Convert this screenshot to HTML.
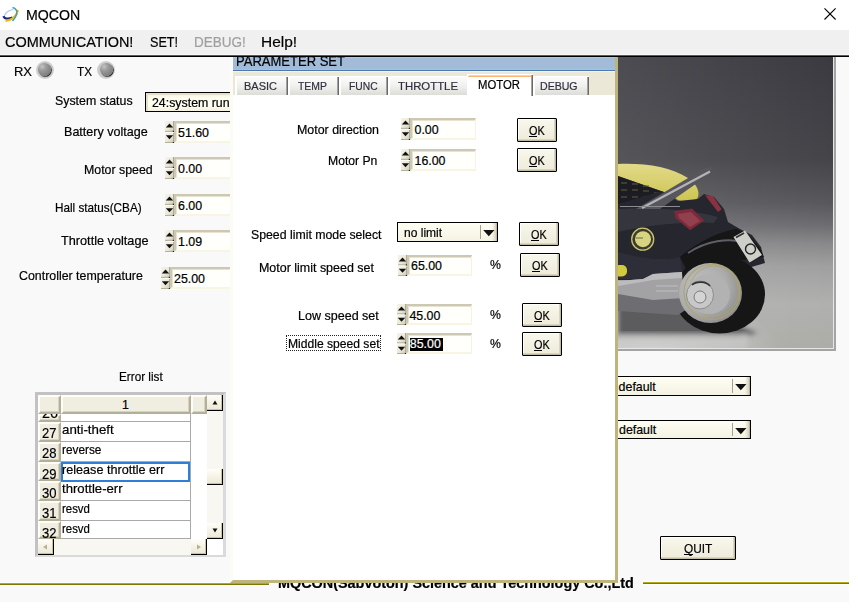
<!DOCTYPE html>
<html><head><meta charset="utf-8"><style>
html,body{margin:0;padding:0;}
body{width:858px;height:609px;overflow:hidden;position:relative;background:#fff;font-family:"Liberation Sans",sans-serif;color:#000;}
.a{position:absolute;}
.t{position:absolute;white-space:pre;font-family:"Liberation Sans",sans-serif;color:#000;z-index:5;-webkit-text-stroke:0.2px currentColor;}
.td{z-index:25;}
.spin{position:absolute;width:9px;height:22px;}
.edit{position:absolute;box-sizing:border-box;background:#fffffb;border-top:2px solid #ccc8b3;border-left:2px solid #ccc8b3;border-right:1px solid #f6f3e2;border-bottom:2px solid #f8f5e4;box-shadow:inset 1px 1px 0 #e6e3d3;}
.btn{position:absolute;box-sizing:border-box;border:1px solid #000;border-radius:1px;background:linear-gradient(#f9f8ee,#f3f1e2 50%,#eeebda);box-shadow:inset -1px -1px 0 #bdb9a2, inset -2px -2px 0 #d9d5c0, inset 1px 1px 0 #fffffa;}
.combo{position:absolute;box-sizing:border-box;border:1px solid #000;background:linear-gradient(#fffef4,#f4f2e2);}
.led{position:absolute;width:18px;height:18px;border-radius:50%;background:radial-gradient(circle at 50% 50%,#c8c8c8 55%,#d6d6d6 80%,#e8e8e8 100%);}
.led i{position:absolute;left:2.5px;top:2.5px;width:13px;height:13px;border-radius:50%;background:radial-gradient(circle at 32% 28%,#c4c4c4 0,#9c9c9c 30%,#848484 65%,#6a6a6a 100%);box-shadow:0.8px 0.8px 0 #2a2a2a;}

</style></head><body>
<svg class="a" style="left:0;top:2px" width="24" height="24" viewBox="0 0 24 24">
 <path d="M4.5 15 C4 11 9 8 13.5 7.5" stroke="#7d96d0" stroke-width="1.2" fill="none" opacity=".55"/>
 <path d="M3.6 14.2 C4 17 8 17.5 12.5 15.5" stroke="#17268a" stroke-width="2.2" fill="none"/>
 <path d="M5.5 18.6 C10 19.2 15 15.5 17.2 11" stroke="#f4b800" stroke-width="2.1" fill="none"/>
 <path d="M12.5 5.5 C16 6 17.5 9 16.5 12.5 C15.5 15.5 14 17.5 12.5 19" stroke="#2aa7cc" stroke-width="1.5" fill="none"/>
 <rect x="16.8" y="8" width="1.6" height="2.5" fill="#f08a00"/>
</svg>
<svg class="a" style="left:820px;top:4px" width="20" height="20" viewBox="0 0 20 20">
 <path d="M4.5 4.3 L15.6 15.5 M15.6 4.3 L4.5 15.5" stroke="#000" stroke-width="1.1"/>
</svg>
<div class="a" style="left:0;top:30px;width:849px;height:25px;background:#f0f0f0"></div>
<div class="a" style="left:0;top:54px;width:849px;height:1px;background:#f8f8f8"></div>
<div class="a" style="left:0;top:55px;width:849px;height:1px;background:#5a5a5a"></div>
<div class="a" style="left:0;top:56px;width:849px;height:1px;background:#000"></div>
<div class="a" style="left:0;top:57px;width:849px;height:545px;background:#f9f9f9"></div>
<div class="led" style="left:35.5px;top:60.5px"><i></i></div>
<div class="led" style="left:97px;top:60.5px"><i></i></div>
<div class="a" style="left:145px;top:92px;width:85px;height:20px;box-sizing:border-box;border:1px solid #000;border-right:0;background:linear-gradient(#f1eedc,#fffdf0 30%,#fffdf0 70%,#f3f0df);box-shadow:inset 2px 2px 0 #e3dfc8;z-index:2;overflow:hidden"></div>
<div class="a" style="left:230px;top:57px;width:3px;height:526px;background:#fcfbf6;z-index:6"></div>

<svg class="a" style="left:165px;top:121px;z-index:3" width="9" height="22" viewBox="0 0 9 22">
<defs><linearGradient id="sg" x1="0" y1="0" x2="1" y2="1"><stop offset="0" stop-color="#f7f5ea"/><stop offset="0.55" stop-color="#ebe8d8"/><stop offset="1" stop-color="#c9c5b0"/></linearGradient></defs>
<rect width="9" height="11.0" fill="url(#sg)"/>
<rect y="11.0" width="9" height="11.0" fill="url(#sg)"/>
<rect x="8" y="0" width="1" height="22" fill="#aeaa96"/>
<rect x="0" y="9.8" width="9" height="1.2" fill="#b9b5a0"/>
<rect x="0" y="11.0" width="9" height="1" fill="#fbfaf3"/>
<rect x="0" y="21" width="9" height="1" fill="#b4b09b"/>
<rect x="7.8" y="9.8" width="1.2" height="1.2" fill="#222"/>
<rect x="7.8" y="21" width="1.2" height="1" fill="#222"/>
<path d="M4.5 2.6 L8.2 6.6 L0.8 6.6 Z" fill="#111"/>
<path d="M0.8 14.2 L8.2 14.2 L4.5 18.2 Z" fill="#111"/>
</svg>
<div class='edit' style='left:174px;top:121px;width:80px;height:22px;z-index:3'></div>
<svg class="a" style="left:165px;top:157px;z-index:3" width="9" height="22" viewBox="0 0 9 22">
<defs><linearGradient id="sg" x1="0" y1="0" x2="1" y2="1"><stop offset="0" stop-color="#f7f5ea"/><stop offset="0.55" stop-color="#ebe8d8"/><stop offset="1" stop-color="#c9c5b0"/></linearGradient></defs>
<rect width="9" height="11.0" fill="url(#sg)"/>
<rect y="11.0" width="9" height="11.0" fill="url(#sg)"/>
<rect x="8" y="0" width="1" height="22" fill="#aeaa96"/>
<rect x="0" y="9.8" width="9" height="1.2" fill="#b9b5a0"/>
<rect x="0" y="11.0" width="9" height="1" fill="#fbfaf3"/>
<rect x="0" y="21" width="9" height="1" fill="#b4b09b"/>
<rect x="7.8" y="9.8" width="1.2" height="1.2" fill="#222"/>
<rect x="7.8" y="21" width="1.2" height="1" fill="#222"/>
<path d="M4.5 2.6 L8.2 6.6 L0.8 6.6 Z" fill="#111"/>
<path d="M0.8 14.2 L8.2 14.2 L4.5 18.2 Z" fill="#111"/>
</svg>
<div class='edit' style='left:174px;top:157px;width:80px;height:22px;z-index:3'></div>
<svg class="a" style="left:165px;top:194px;z-index:3" width="9" height="22" viewBox="0 0 9 22">
<defs><linearGradient id="sg" x1="0" y1="0" x2="1" y2="1"><stop offset="0" stop-color="#f7f5ea"/><stop offset="0.55" stop-color="#ebe8d8"/><stop offset="1" stop-color="#c9c5b0"/></linearGradient></defs>
<rect width="9" height="11.0" fill="url(#sg)"/>
<rect y="11.0" width="9" height="11.0" fill="url(#sg)"/>
<rect x="8" y="0" width="1" height="22" fill="#aeaa96"/>
<rect x="0" y="9.8" width="9" height="1.2" fill="#b9b5a0"/>
<rect x="0" y="11.0" width="9" height="1" fill="#fbfaf3"/>
<rect x="0" y="21" width="9" height="1" fill="#b4b09b"/>
<rect x="7.8" y="9.8" width="1.2" height="1.2" fill="#222"/>
<rect x="7.8" y="21" width="1.2" height="1" fill="#222"/>
<path d="M4.5 2.6 L8.2 6.6 L0.8 6.6 Z" fill="#111"/>
<path d="M0.8 14.2 L8.2 14.2 L4.5 18.2 Z" fill="#111"/>
</svg>
<div class='edit' style='left:174px;top:194px;width:80px;height:22px;z-index:3'></div>
<svg class="a" style="left:165px;top:230px;z-index:3" width="9" height="22" viewBox="0 0 9 22">
<defs><linearGradient id="sg" x1="0" y1="0" x2="1" y2="1"><stop offset="0" stop-color="#f7f5ea"/><stop offset="0.55" stop-color="#ebe8d8"/><stop offset="1" stop-color="#c9c5b0"/></linearGradient></defs>
<rect width="9" height="11.0" fill="url(#sg)"/>
<rect y="11.0" width="9" height="11.0" fill="url(#sg)"/>
<rect x="8" y="0" width="1" height="22" fill="#aeaa96"/>
<rect x="0" y="9.8" width="9" height="1.2" fill="#b9b5a0"/>
<rect x="0" y="11.0" width="9" height="1" fill="#fbfaf3"/>
<rect x="0" y="21" width="9" height="1" fill="#b4b09b"/>
<rect x="7.8" y="9.8" width="1.2" height="1.2" fill="#222"/>
<rect x="7.8" y="21" width="1.2" height="1" fill="#222"/>
<path d="M4.5 2.6 L8.2 6.6 L0.8 6.6 Z" fill="#111"/>
<path d="M0.8 14.2 L8.2 14.2 L4.5 18.2 Z" fill="#111"/>
</svg>
<div class='edit' style='left:174px;top:230px;width:80px;height:22px;z-index:3'></div>
<svg class="a" style="left:161px;top:267px;z-index:3" width="9" height="22" viewBox="0 0 9 22">
<defs><linearGradient id="sg" x1="0" y1="0" x2="1" y2="1"><stop offset="0" stop-color="#f7f5ea"/><stop offset="0.55" stop-color="#ebe8d8"/><stop offset="1" stop-color="#c9c5b0"/></linearGradient></defs>
<rect width="9" height="11.0" fill="url(#sg)"/>
<rect y="11.0" width="9" height="11.0" fill="url(#sg)"/>
<rect x="8" y="0" width="1" height="22" fill="#aeaa96"/>
<rect x="0" y="9.8" width="9" height="1.2" fill="#b9b5a0"/>
<rect x="0" y="11.0" width="9" height="1" fill="#fbfaf3"/>
<rect x="0" y="21" width="9" height="1" fill="#b4b09b"/>
<rect x="7.8" y="9.8" width="1.2" height="1.2" fill="#222"/>
<rect x="7.8" y="21" width="1.2" height="1" fill="#222"/>
<path d="M4.5 2.6 L8.2 6.6 L0.8 6.6 Z" fill="#111"/>
<path d="M0.8 14.2 L8.2 14.2 L4.5 18.2 Z" fill="#111"/>
</svg>
<div class='edit' style='left:170px;top:267px;width:80px;height:22px;z-index:3'></div>
<div class="a" style="left:35px;top:392px;width:191px;height:165px;box-sizing:border-box;border-top:3px solid #c2c2c2;border-left:3px solid #c2c2c2;border-right:3px solid #dadada;border-bottom:3px solid #dadada;background:#fff"></div>
<div class='a' style='left:38px;top:395px;width:23px;height:19px;box-sizing:border-box;background:#f0eee0;border-top:2px solid #fefdf7;border-left:2px solid #fefdf7;border-right:2px solid #b3af98;border-bottom:2px solid #b3af98;box-shadow:inset -1px -1px 0 #d8d4c0;z-index:2'></div>
<div class='a' style='left:61px;top:395px;width:130px;height:19px;box-sizing:border-box;background:#f0eee0;border-top:2px solid #fefdf7;border-left:2px solid #fefdf7;border-right:2px solid #b3af98;border-bottom:2px solid #b3af98;box-shadow:inset -1px -1px 0 #d8d4c0;z-index:2'></div>
<div class='a' style='left:191px;top:395px;width:16px;height:19px;box-sizing:border-box;background:#f0eee0;border-top:2px solid #fefdf7;border-left:2px solid #fefdf7;border-right:2px solid #b3af98;border-bottom:2px solid #b3af98;box-shadow:inset -1px -1px 0 #d8d4c0;z-index:2'></div>
<div class='a' style='left:38px;top:414px;width:23px;height:7.5px;box-sizing:border-box;background:#f0eee0;border-top:2px solid #fefdf7;border-left:2px solid #fefdf7;border-right:2px solid #b3af98;border-bottom:2px solid #b3af98;box-shadow:inset -1px -1px 0 #d8d4c0;z-index:2'></div>
<div class='a' style='left:61px;top:414px;width:130px;height:7.5px;box-sizing:border-box;border-bottom:1px solid #a9a9a9;border-right:1px solid #a9a9a9;z-index:2'></div>
<div class='a' style='left:38px;top:421.5px;width:23px;height:20px;box-sizing:border-box;background:#f0eee0;border-top:2px solid #fefdf7;border-left:2px solid #fefdf7;border-right:2px solid #b3af98;border-bottom:2px solid #b3af98;box-shadow:inset -1px -1px 0 #d8d4c0;z-index:2'></div>
<div class='a' style='left:61px;top:421.5px;width:130px;height:20px;box-sizing:border-box;border-bottom:1px solid #a9a9a9;border-right:1px solid #a9a9a9;z-index:2'></div>
<div class='a' style='left:38px;top:441.5px;width:23px;height:20.3px;box-sizing:border-box;background:#f0eee0;border-top:2px solid #fefdf7;border-left:2px solid #fefdf7;border-right:2px solid #b3af98;border-bottom:2px solid #b3af98;box-shadow:inset -1px -1px 0 #d8d4c0;z-index:2'></div>
<div class='a' style='left:61px;top:441.5px;width:130px;height:20.3px;box-sizing:border-box;border-bottom:1px solid #a9a9a9;border-right:1px solid #a9a9a9;z-index:2'></div>
<div class='a' style='left:38px;top:461.8px;width:23px;height:19.5px;box-sizing:border-box;background:#f0eee0;border-top:2px solid #fefdf7;border-left:2px solid #fefdf7;border-right:2px solid #b3af98;border-bottom:2px solid #b3af98;box-shadow:inset -1px -1px 0 #d8d4c0;z-index:2'></div>
<div class='a' style='left:61px;top:461.8px;width:130px;height:19.5px;box-sizing:border-box;border-bottom:1px solid #a9a9a9;border-right:1px solid #a9a9a9;z-index:2'></div>
<div class='a' style='left:38px;top:481.3px;width:23px;height:20px;box-sizing:border-box;background:#f0eee0;border-top:2px solid #fefdf7;border-left:2px solid #fefdf7;border-right:2px solid #b3af98;border-bottom:2px solid #b3af98;box-shadow:inset -1px -1px 0 #d8d4c0;z-index:2'></div>
<div class='a' style='left:61px;top:481.3px;width:130px;height:20px;box-sizing:border-box;border-bottom:1px solid #a9a9a9;border-right:1px solid #a9a9a9;z-index:2'></div>
<div class='a' style='left:38px;top:501.3px;width:23px;height:20px;box-sizing:border-box;background:#f0eee0;border-top:2px solid #fefdf7;border-left:2px solid #fefdf7;border-right:2px solid #b3af98;border-bottom:2px solid #b3af98;box-shadow:inset -1px -1px 0 #d8d4c0;z-index:2'></div>
<div class='a' style='left:61px;top:501.3px;width:130px;height:20px;box-sizing:border-box;border-bottom:1px solid #a9a9a9;border-right:1px solid #a9a9a9;z-index:2'></div>
<div class='a' style='left:38px;top:521.3px;width:23px;height:17.7px;box-sizing:border-box;background:#f0eee0;border-top:2px solid #fefdf7;border-left:2px solid #fefdf7;border-right:2px solid #b3af98;border-bottom:2px solid #b3af98;box-shadow:inset -1px -1px 0 #d8d4c0;z-index:2'></div>
<div class='a' style='left:61px;top:521.3px;width:130px;height:17.7px;box-sizing:border-box;border-bottom:1px solid #a9a9a9;border-right:1px solid #a9a9a9;z-index:2'></div>
<div class='a' style='left:36px;top:414px;width:25px;height:7px;overflow:hidden;z-index:3'><div class='t' style='left:5.7px;top:-8.4px;font-size:14.5px;line-height:14.5px;transform:scaleX(0.985);transform-origin:0 0'>26</div></div>
<div class='a' style='left:61px;top:462px;width:129px;height:20px;box-sizing:border-box;border:2px solid #2f7fd6;z-index:3'></div>
<div class='a' style='left:207px;top:395px;width:16px;height:143px;background:#f8f7f2;z-index:2'></div>
<div class='a' style='left:207px;top:395px;width:16px;height:16px;box-sizing:border-box;background:linear-gradient(#fffef8,#ebe8d6);border-right:1px solid #000;border-bottom:1px solid #000;box-shadow:inset -1px -1px 0 #cfc48c;z-index:3'><svg class='a' style='left:5px;top:5px' width='6' height='5'><path d='M3 0.5 L5.5 4.5 L0.5 4.5Z' fill='#111'/></svg></div>
<div class='a' style='left:207px;top:523px;width:16px;height:16px;box-sizing:border-box;background:linear-gradient(#fffef8,#ebe8d6);border-right:1px solid #000;border-bottom:1px solid #000;box-shadow:inset -1px -1px 0 #cfc48c;z-index:3'><svg class='a' style='left:5px;top:5px' width='6' height='5'><path d='M0.5 0.5 L5.5 0.5 L3 4.5Z' fill='#111'/></svg></div>
<div class='a' style='left:207px;top:469px;width:16px;height:16px;box-sizing:border-box;background:linear-gradient(#fffef8,#ebe8d6);border-right:1px solid #000;border-bottom:1px solid #000;box-shadow:inset -1px -1px 0 #cfc48c;z-index:3'></div>
<div class='a' style='left:38px;top:539px;width:169px;height:16px;background:#f8f7f2;z-index:2'></div>
<div class='a' style='left:38px;top:539px;width:16px;height:16px;box-sizing:border-box;background:linear-gradient(#fffef8,#ebe8d6);border-right:1px solid #000;border-bottom:1px solid #000;box-shadow:inset -1px -1px 0 #cfc48c;z-index:3'><svg class='a' style='left:4px;top:5px' width='6' height='6'><path d='M1 3 L5 0.5 L5 5.5Z' fill='#b8b090'/></svg></div>
<div class='a' style='left:191px;top:539px;width:16px;height:16px;box-sizing:border-box;background:linear-gradient(#fffef8,#ebe8d6);border-right:1px solid #000;border-bottom:1px solid #000;box-shadow:inset -1px -1px 0 #cfc48c;z-index:3'><svg class='a' style='left:5px;top:5px' width='6' height='6'><path d='M5 3 L1 0.5 L1 5.5Z' fill='#b8b090'/></svg></div>
<div class='a' style='left:207px;top:539px;width:16px;height:16px;background:#fff;z-index:2'></div>
<svg class="a" style="left:618px;top:57px" width="218" height="295" viewBox="0 0 218 295">
 <defs>
  <linearGradient id="bg" x1="0" y1="0" x2="0" y2="1">
   <stop offset="0" stop-color="#3a3a40"/>
   <stop offset="0.35" stop-color="#444449"/>
   <stop offset="0.5" stop-color="#58585c"/>
   <stop offset="0.58" stop-color="#6e6e72"/>
   <stop offset="0.64" stop-color="#88888a"/>
   <stop offset="0.72" stop-color="#a0a0a0"/>
   <stop offset="0.85" stop-color="#b0b0af"/>
   <stop offset="1" stop-color="#acaca8"/>
  </linearGradient>
  <linearGradient id="lft" x1="0" y1="0" x2="1" y2="0">
   <stop offset="0" stop-color="#fff" stop-opacity="0.09"/>
   <stop offset="1" stop-color="#fff" stop-opacity="0"/>
  </linearGradient>
  <radialGradient id="gl" cx="0.15" cy="1" r="0.6">
   <stop offset="0" stop-color="#e0e0e0" stop-opacity="0.8"/>
   <stop offset="1" stop-color="#e0e0e0" stop-opacity="0"/>
  </radialGradient>
  <radialGradient id="hub" cx="0.35" cy="0.4" r="0.7">
   <stop offset="0" stop-color="#c2c2c2"/>
   <stop offset="0.6" stop-color="#acacac"/>
   <stop offset="1" stop-color="#8a8a8a"/>
  </radialGradient>
  <linearGradient id="seat" x1="0" y1="0" x2="0" y2="1">
   <stop offset="0" stop-color="#e2da8a"/>
   <stop offset="1" stop-color="#cdc450"/>
  </linearGradient>
  <linearGradient id="gnd" x1="0" y1="0" x2="0" y2="1">
   <stop offset="0" stop-color="#6e6e72"/>
   <stop offset="0.45" stop-color="#525254"/>
   <stop offset="0.6" stop-color="#9c9c9c"/>
   <stop offset="1" stop-color="#c6c6c4"/>
  </linearGradient>
  <filter id="blur"><feGaussianBlur stdDeviation="2.5"/></filter>
  <filter id="b1"><feGaussianBlur stdDeviation="0.5"/></filter>
 </defs>
 <rect width="215" height="291" fill="url(#bg)"/>
 <rect width="215" height="291" fill="url(#lft)"/>
 <rect y="200" width="215" height="91" fill="url(#gl)"/>
 <!-- ground shadow -->
 <path d="M0 246 L70 250 L112 266 L140 276 L120 280 L0 280 Z" fill="#5c5c5e" filter="url(#blur)"/>
 <rect x="0" y="276" width="130" height="15" fill="#c8c8c6" opacity=".7" filter="url(#blur)"/>
 <g filter="url(#b1)">
 <!-- seat -->
 <path d="M0 107 C28 106 52 110 70 121 C78 126 82 134 80 140 C78 145 68 146 60 143 L52 137 L43 134 L0 119 Z" fill="url(#seat)"/>
 <path d="M0 119 L43 134 L46 148 L0 148 Z" fill="#1c1c24"/>
 <path d="M3 126 h6 M14 127 h6 M25 129 h6 M3 133 h6 M14 133 h6 M25 134 h6 M36 136 h5 M3 140 h6 M14 140 h6 M25 140 h6" stroke="#5e5c3c" stroke-width="1"/>
 <!-- body dark blob -->
 <path d="M0 147 L44 134 L60 144 L80 142 L86 137 L96 140 L106 152 L110 165 L122 172 L134 178 L143 190 L147 206 L120 214 L70 222 L40 224 L0 223 Z" fill="#26262e"/>
 <path d="M0 152 C30 150 70 152 100 160 L96 166 C70 164 30 168 0 175 Z" fill="#40404a" opacity=".55"/>
 <path d="M0 195 C20 200 40 205 62 200 L66 222 L0 222 Z" fill="#30303a" opacity=".8"/>
 <!-- dark gap / fender -->
 <path d="M62 200 C80 185 100 175 118 172 C130 176 140 186 146 200 L110 205 L70 215 Z" fill="#131316"/>
 <path d="M70 196 C88 184 110 180 130 186" stroke="#5e5e66" stroke-width="2" fill="none"/>
 <!-- tire -->
 <ellipse cx="101.5" cy="237.5" rx="45.5" ry="39" fill="#141418"/>
 <!-- swingarm -->
 <path d="M0 236 L64 240 L72 250 L60 258 L0 254 Z" fill="#6e6e72"/>
 <path d="M0 224 L25 222 L35 217 L64 215 L66 241 L35 243 L0 237 Z" fill="#a2a2a4"/>
 <path d="M0 224 L25 222 L35 217 L64 215 L64 221 L35 223 L0 229 Z" fill="#bcbcbe"/>
 <path d="M38 229 L60 229 M38 234 L60 234" stroke="#c6c6c8" stroke-width="0.8"/>
 <!-- hub -->
 <ellipse cx="92.5" cy="236" rx="31.5" ry="30" fill="url(#hub)"/>
 <ellipse cx="94" cy="235" rx="28" ry="27.5" fill="none" stroke="#aea46a" stroke-width="1.2" opacity=".9"/>
 <ellipse cx="96" cy="234" rx="24.5" ry="25" fill="none" stroke="#aea46a" stroke-width="1" opacity=".8"/>
 <ellipse cx="91" cy="237" rx="21" ry="20" fill="#b2b2b2"/>
 <ellipse cx="82" cy="238" rx="13.5" ry="14" fill="#c8c8c8" stroke="#8c8c8c" stroke-width="1"/>
 <path d="M74 228 C78 224 88 224 92 229" stroke="#333" stroke-width="1.6" fill="none"/>
 <ellipse cx="82" cy="240" rx="6" ry="6" fill="#d4d4d4" stroke="#666" stroke-width="0.8"/>
 <!-- tail lights -->
 <path d="M56.4 154 L74 151.4 L86.2 163.6 L72.2 173.2 L57.3 161 Z" fill="#7c2c3a"/>
 <path d="M60 157 L73 155 L82 164 L72 170 L61 161 Z" fill="#a4505e" opacity=".55"/>
 <path d="M87 138.2 L94.9 139.1 L103.6 152.2 L100.1 154.9 Z" fill="#8a3242"/>
 <!-- handle bar -->
 <path d="M18 152 L87 111 L94 110 L92 117 L42 152 Z" fill="#56565c"/>
 <path d="M24 151 L92 114.5" stroke="#b4b4b8" stroke-width="2.2"/>
 <path d="M2 149.5 L62 149.5" stroke="#8c8c90" stroke-width="1"/>
 <!-- badge -->
 <circle cx="24.7" cy="182.2" r="11" fill="#3a3a30" stroke="#c8c46a" stroke-width="1.3"/>
 <circle cx="25" cy="182.2" r="8" fill="#d6d480"/>
 <path d="M18 181 h7" stroke="#6a6a40" stroke-width="1"/>
 <!-- yellow piece -->
 <rect x="-4" y="208" width="13" height="11.5" rx="5" fill="#d2ca3c"/>
 <!-- plate -->
 <path d="M115.5 180 L127 173.5 L144 198 L131.5 205.5 Z" fill="#cfcfca"/>
 <circle cx="132.5" cy="192" r="5" fill="none" stroke="#222" stroke-width="1.4"/>
 <path d="M118 180.5 L126 176" stroke="#333" stroke-width="2"/>
 </g>
 <rect x="215" y="0" width="1" height="292" fill="#e6e6e6"/>
 <rect x="216" y="0" width="2" height="294" fill="#a4a4a4"/>
 <rect x="0" y="291" width="216" height="1" fill="#e6e6e6"/>
 <rect x="0" y="292" width="218" height="2" fill="#a4a4a4"/>
</svg>

<div class='combo' style='left:560px;top:376px;width:191px;height:20px;z-index:3'>
<div class='a' style='left:171px;top:2px;width:1px;height:14px;background:#a3a190'></div>
<div class='a' style='left:172px;top:0;width:17px;height:18px;background:linear-gradient(90deg,rgba(255,255,255,0) 70%,#d8d4bf 92%,#a8a48e)'></div>
<svg class='a' style='left:173.5px;top:7.0px' width='12' height='7' viewBox='0 0 12 7'><path d='M0.2 0 L11.5 0 L5.8 6.3 Z' fill='#111'/></svg>
</div>
<div class='combo' style='left:560px;top:420px;width:191px;height:19px;z-index:3'>
<div class='a' style='left:171px;top:2px;width:1px;height:13px;background:#a3a190'></div>
<div class='a' style='left:172px;top:0;width:17px;height:17px;background:linear-gradient(90deg,rgba(255,255,255,0) 70%,#d8d4bf 92%,#a8a48e)'></div>
<svg class='a' style='left:173.5px;top:6.5px' width='12' height='7' viewBox='0 0 12 7'><path d='M0.2 0 L11.5 0 L5.8 6.3 Z' fill='#111'/></svg>
</div>
<div class='btn' style='left:660px;top:536px;width:76px;height:24px;z-index:3'></div>
<div class='a' style='left:683.6px;top:554px;width:9px;height:1px;background:#000;z-index:6'></div>
<div class='a' style='left:0;top:582px;width:269px;height:4px;background:linear-gradient(#fff 0 25%,#aeaa1a 25% 50%,#7c7800 50% 75%,#fff 75%)'></div>
<div class='a' style='left:643px;top:581px;width:206px;height:4px;background:linear-gradient(#fff 0 25%,#aeaa1a 25% 50%,#7c7800 50% 75%,#fff 75%)'></div>
<div class='a' style='left:269px;top:575px;width:374px;height:20px;background:#f9f9f9'></div>
<svg class='a' style='left:229px;top:580px;z-index:20' width='5' height='3'><path d='M4 0 L5 0 L5 3 L1 3 Z' fill='#bab176'/></svg>
<div class="a" style="left:233px;top:57px;width:385px;height:526px;z-index:20">
 <div class="a" style="left:0;top:0;width:382px;height:13px;background:#a1bbd9"></div>
 <div class="a" style="left:0;top:0;width:382px;height:1px;background:#abc5e4"></div>
 <div class="a" style="left:0;top:12px;width:382px;height:1px;background:#a8c2de"></div>
 <div class="a" style="left:0;top:13px;width:382px;height:1px;background:#4a7ab0"></div>
 <div class="a" style="left:0;top:14px;width:382px;height:1px;background:#f4f4ee"></div>
 <div class="a" style="left:0;top:15px;width:382px;height:23px;background:#ebe8d8"></div>
 <div class="a" style="left:0;top:38px;width:382px;height:485px;background:#fff"></div>
 <div class="a" style="left:382px;top:0;width:3px;height:526px;background:#bdb57c"></div>
 <div class="a" style="left:0;top:523px;width:385px;height:3px;background:#bdb57c"></div>
</div>

<div class='a' style='left:235px;top:76px;width:53px;height:19px;background:linear-gradient(#fdfdfd,#f1f1ef 50%,#dcdcd8);z-index:21'><div class='a' style='left:0;top:0;width:2px;height:19px;background:#fff'></div><div class='a' style='left:0;top:0;width:53px;height:1px;background:#fff'></div><div class='a' style='left:51px;top:1px;width:1px;height:18px;background:#a0a0a0'></div><div class='a' style='left:52px;top:1px;width:1px;height:18px;background:#6a6a6a'></div></div>
<div class='a' style='left:288px;top:76px;width:51px;height:19px;background:linear-gradient(#fdfdfd,#f1f1ef 50%,#dcdcd8);z-index:21'><div class='a' style='left:0;top:0;width:2px;height:19px;background:#fff'></div><div class='a' style='left:0;top:0;width:51px;height:1px;background:#fff'></div><div class='a' style='left:49px;top:1px;width:1px;height:18px;background:#a0a0a0'></div><div class='a' style='left:50px;top:1px;width:1px;height:18px;background:#6a6a6a'></div></div>
<div class='a' style='left:339px;top:76px;width:49px;height:19px;background:linear-gradient(#fdfdfd,#f1f1ef 50%,#dcdcd8);z-index:21'><div class='a' style='left:0;top:0;width:2px;height:19px;background:#fff'></div><div class='a' style='left:0;top:0;width:49px;height:1px;background:#fff'></div><div class='a' style='left:47px;top:1px;width:1px;height:18px;background:#a0a0a0'></div><div class='a' style='left:48px;top:1px;width:1px;height:18px;background:#6a6a6a'></div></div>
<div class='a' style='left:388px;top:76px;width:81px;height:19px;background:linear-gradient(#fdfdfd,#f1f1ef 50%,#dcdcd8);z-index:21'><div class='a' style='left:0;top:0;width:2px;height:19px;background:#fff'></div><div class='a' style='left:0;top:0;width:81px;height:1px;background:#fff'></div><div class='a' style='left:79px;top:1px;width:1px;height:18px;background:#a0a0a0'></div><div class='a' style='left:80px;top:1px;width:1px;height:18px;background:#6a6a6a'></div></div>
<div class='a' style='left:533px;top:76px;width:56px;height:19px;background:linear-gradient(#fdfdfd,#f1f1ef 50%,#dcdcd8);z-index:21'><div class='a' style='left:0;top:0;width:2px;height:19px;background:#fff'></div><div class='a' style='left:0;top:0;width:56px;height:1px;background:#fff'></div><div class='a' style='left:54px;top:1px;width:1px;height:18px;background:#a0a0a0'></div><div class='a' style='left:55px;top:1px;width:1px;height:18px;background:#6a6a6a'></div></div>
<div class='a' style='left:467px;top:74px;width:66px;height:22px;background:#fff;z-index:21'><div class='a' style='left:2px;top:1px;width:62px;height:1px;background:#ffd3a0'></div><div class='a' style='left:1px;top:2px;width:63px;height:1px;background:#ffb475'></div><div class='a' style='left:64px;top:1px;width:1px;height:21px;background:#a4a4a4'></div><div class='a' style='left:65px;top:1px;width:1px;height:21px;background:#6a6a6a'></div></div>
<div class='a' style='left:233px;top:57px;width:382px;height:13px;overflow:hidden;z-index:22'><div class='t' style='left:2.6px;top:-3.0px;font-size:14px;line-height:14px;transform:scaleX(0.93);transform-origin:0 0'>PARAMETER SET</div></div>
<div class='a' style='left:233px;top:57px;width:382px;height:0px;z-index:23'></div>
<svg class="a" style="left:401px;top:118px;z-index:21" width="9" height="22" viewBox="0 0 9 22">
<defs><linearGradient id="sg" x1="0" y1="0" x2="1" y2="1"><stop offset="0" stop-color="#f7f5ea"/><stop offset="0.55" stop-color="#ebe8d8"/><stop offset="1" stop-color="#c9c5b0"/></linearGradient></defs>
<rect width="9" height="11.0" fill="url(#sg)"/>
<rect y="11.0" width="9" height="11.0" fill="url(#sg)"/>
<rect x="8" y="0" width="1" height="22" fill="#aeaa96"/>
<rect x="0" y="9.8" width="9" height="1.2" fill="#b9b5a0"/>
<rect x="0" y="11.0" width="9" height="1" fill="#fbfaf3"/>
<rect x="0" y="21" width="9" height="1" fill="#b4b09b"/>
<rect x="7.8" y="9.8" width="1.2" height="1.2" fill="#222"/>
<rect x="7.8" y="21" width="1.2" height="1" fill="#222"/>
<path d="M4.5 2.6 L8.2 6.6 L0.8 6.6 Z" fill="#111"/>
<path d="M0.8 14.2 L8.2 14.2 L4.5 18.2 Z" fill="#111"/>
</svg>
<div class='edit' style='left:410px;top:118px;width:66px;height:22px;z-index:21'></div>
<svg class="a" style="left:401px;top:149px;z-index:21" width="9" height="22" viewBox="0 0 9 22">
<defs><linearGradient id="sg" x1="0" y1="0" x2="1" y2="1"><stop offset="0" stop-color="#f7f5ea"/><stop offset="0.55" stop-color="#ebe8d8"/><stop offset="1" stop-color="#c9c5b0"/></linearGradient></defs>
<rect width="9" height="11.0" fill="url(#sg)"/>
<rect y="11.0" width="9" height="11.0" fill="url(#sg)"/>
<rect x="8" y="0" width="1" height="22" fill="#aeaa96"/>
<rect x="0" y="9.8" width="9" height="1.2" fill="#b9b5a0"/>
<rect x="0" y="11.0" width="9" height="1" fill="#fbfaf3"/>
<rect x="0" y="21" width="9" height="1" fill="#b4b09b"/>
<rect x="7.8" y="9.8" width="1.2" height="1.2" fill="#222"/>
<rect x="7.8" y="21" width="1.2" height="1" fill="#222"/>
<path d="M4.5 2.6 L8.2 6.6 L0.8 6.6 Z" fill="#111"/>
<path d="M0.8 14.2 L8.2 14.2 L4.5 18.2 Z" fill="#111"/>
</svg>
<div class='edit' style='left:410px;top:149px;width:66px;height:22px;z-index:21'></div>
<div class='btn' style='left:517px;top:118px;width:40px;height:24px;z-index:21'></div>
<div class='a' style='left:528.8px;top:136.0px;width:8.5px;height:1px;background:#000;z-index:25'></div>
<div class='btn' style='left:517px;top:148px;width:40px;height:24px;z-index:21'></div>
<div class='a' style='left:528.8px;top:166.0px;width:8.5px;height:1px;background:#000;z-index:25'></div>
<div class='combo' style='left:397px;top:222px;width:101px;height:20px;z-index:21'>
<div class='a' style='left:82px;top:2px;width:1px;height:14px;background:#a3a190'></div>
<div class='a' style='left:83px;top:0;width:16px;height:18px;background:linear-gradient(90deg,rgba(255,255,255,0) 70%,#d8d4bf 92%,#a8a48e)'></div>
<svg class='a' style='left:84.5px;top:7.0px' width='12' height='7' viewBox='0 0 12 7'><path d='M0.2 0 L11.5 0 L5.8 6.3 Z' fill='#111'/></svg>
</div>
<div class='btn' style='left:519px;top:222px;width:40px;height:24px;z-index:21'></div>
<div class='a' style='left:530.8px;top:240.0px;width:8.5px;height:1px;background:#000;z-index:25'></div>
<svg class="a" style="left:398px;top:255px;z-index:21" width="9" height="21" viewBox="0 0 9 21">
<defs><linearGradient id="sg" x1="0" y1="0" x2="1" y2="1"><stop offset="0" stop-color="#f7f5ea"/><stop offset="0.55" stop-color="#ebe8d8"/><stop offset="1" stop-color="#c9c5b0"/></linearGradient></defs>
<rect width="9" height="10.5" fill="url(#sg)"/>
<rect y="10.5" width="9" height="10.5" fill="url(#sg)"/>
<rect x="8" y="0" width="1" height="21" fill="#aeaa96"/>
<rect x="0" y="9.3" width="9" height="1.2" fill="#b9b5a0"/>
<rect x="0" y="10.5" width="9" height="1" fill="#fbfaf3"/>
<rect x="0" y="20" width="9" height="1" fill="#b4b09b"/>
<rect x="7.8" y="9.3" width="1.2" height="1.2" fill="#222"/>
<rect x="7.8" y="20" width="1.2" height="1" fill="#222"/>
<path d="M4.5 2.6 L8.2 6.6 L0.8 6.6 Z" fill="#111"/>
<path d="M0.8 13.7 L8.2 13.7 L4.5 17.7 Z" fill="#111"/>
</svg>
<div class='edit' style='left:407px;top:255px;width:65px;height:21px;z-index:21'></div>
<div class='btn' style='left:520px;top:253px;width:40px;height:24px;z-index:21'></div>
<div class='a' style='left:531.8px;top:271.0px;width:8.5px;height:1px;background:#000;z-index:25'></div>
<svg class="a" style="left:397px;top:304px;z-index:21" width="9" height="21" viewBox="0 0 9 21">
<defs><linearGradient id="sg" x1="0" y1="0" x2="1" y2="1"><stop offset="0" stop-color="#f7f5ea"/><stop offset="0.55" stop-color="#ebe8d8"/><stop offset="1" stop-color="#c9c5b0"/></linearGradient></defs>
<rect width="9" height="10.5" fill="url(#sg)"/>
<rect y="10.5" width="9" height="10.5" fill="url(#sg)"/>
<rect x="8" y="0" width="1" height="21" fill="#aeaa96"/>
<rect x="0" y="9.3" width="9" height="1.2" fill="#b9b5a0"/>
<rect x="0" y="10.5" width="9" height="1" fill="#fbfaf3"/>
<rect x="0" y="20" width="9" height="1" fill="#b4b09b"/>
<rect x="7.8" y="9.3" width="1.2" height="1.2" fill="#222"/>
<rect x="7.8" y="20" width="1.2" height="1" fill="#222"/>
<path d="M4.5 2.6 L8.2 6.6 L0.8 6.6 Z" fill="#111"/>
<path d="M0.8 13.7 L8.2 13.7 L4.5 17.7 Z" fill="#111"/>
</svg>
<div class='edit' style='left:406px;top:304px;width:66px;height:21px;z-index:21'></div>
<div class='btn' style='left:522px;top:303px;width:40px;height:24px;z-index:21'></div>
<div class='a' style='left:533.8px;top:321.0px;width:8.5px;height:1px;background:#000;z-index:25'></div>
<div class='a' style='left:286px;top:335px;width:95px;height:16px;box-sizing:border-box;border:1px dotted #222;z-index:24'></div>
<svg class="a" style="left:397px;top:333px;z-index:21" width="9" height="21" viewBox="0 0 9 21">
<defs><linearGradient id="sg" x1="0" y1="0" x2="1" y2="1"><stop offset="0" stop-color="#f7f5ea"/><stop offset="0.55" stop-color="#ebe8d8"/><stop offset="1" stop-color="#c9c5b0"/></linearGradient></defs>
<rect width="9" height="10.5" fill="url(#sg)"/>
<rect y="10.5" width="9" height="10.5" fill="url(#sg)"/>
<rect x="8" y="0" width="1" height="21" fill="#aeaa96"/>
<rect x="0" y="9.3" width="9" height="1.2" fill="#b9b5a0"/>
<rect x="0" y="10.5" width="9" height="1" fill="#fbfaf3"/>
<rect x="0" y="20" width="9" height="1" fill="#b4b09b"/>
<rect x="7.8" y="9.3" width="1.2" height="1.2" fill="#222"/>
<rect x="7.8" y="20" width="1.2" height="1" fill="#222"/>
<path d="M4.5 2.6 L8.2 6.6 L0.8 6.6 Z" fill="#111"/>
<path d="M0.8 13.7 L8.2 13.7 L4.5 17.7 Z" fill="#111"/>
</svg>
<div class='edit' style='left:406px;top:333px;width:66px;height:21px;z-index:21'></div>
<div class='a' style='left:410px;top:337.5px;width:33px;height:13px;background:#000;z-index:24'></div>
<div class='btn' style='left:522px;top:332px;width:40px;height:24px;z-index:21'></div>
<div class='a' style='left:533.8px;top:350.0px;width:8.5px;height:1px;background:#000;z-index:25'></div>
<div class='t' style='left:26.00px;top:7.12px;font-size:15.1px;line-height:15.1px;transform:scaleX(0.9385);transform-origin:0 0;'>MQCON</div>
<div class='t' style='left:5.30px;top:34.12px;font-size:15.1px;line-height:15.1px;transform:scaleX(0.9590);transform-origin:0 0;'>COMMUNICATION!</div>
<div class='t' style='left:149.60px;top:34.12px;font-size:15.1px;line-height:15.1px;transform:scaleX(0.8343);transform-origin:0 0;'>SET!</div>
<div class='t' style='left:193.60px;top:34.12px;font-size:15.1px;line-height:15.1px;transform:scaleX(0.8950);transform-origin:0 0;color:#a0a0a0'>DEBUG!</div>
<div class='t' style='left:261.40px;top:34.12px;font-size:15.1px;line-height:15.1px;transform:scaleX(1.0241);transform-origin:0 0;'>Help!</div>
<div class='t' style='left:14.00px;top:65.37px;font-size:13.5px;line-height:13.5px;transform:scaleX(0.9592);transform-origin:0 0;'>RX</div>
<div class='t' style='left:77.00px;top:65.37px;font-size:13.5px;line-height:13.5px;transform:scaleX(0.8688);transform-origin:0 0;'>TX</div>
<div class='t' style='left:55.30px;top:94.80px;font-size:12.4px;line-height:12.4px;transform:scaleX(0.9973);transform-origin:0 0;'>System status</div>
<div class='t' style='left:63.60px;top:126.00px;font-size:12.4px;line-height:12.4px;transform:scaleX(1.0138);transform-origin:0 0;'>Battery voltage</div>
<div class='t' style='left:84.30px;top:163.50px;font-size:12.4px;line-height:12.4px;transform:scaleX(0.9975);transform-origin:0 0;'>Motor speed</div>
<div class='t' style='left:54.70px;top:201.70px;font-size:12.4px;line-height:12.4px;transform:scaleX(0.9456);transform-origin:0 0;'>Hall status(CBA)</div>
<div class='t' style='left:60.80px;top:234.50px;font-size:12.4px;line-height:12.4px;transform:scaleX(1.0245);transform-origin:0 0;'>Throttle voltage</div>
<div class='t' style='left:19.40px;top:269.50px;font-size:12.4px;line-height:12.4px;transform:scaleX(0.9986);transform-origin:0 0;'>Controller temperature</div>
<div class='t' style='left:152.20px;top:96.60px;font-size:12.4px;line-height:12.4px;transform:scaleX(0.9971);transform-origin:0 0;'>24:system run</div>
<div class='t' style='left:178.00px;top:126.80px;font-size:12.4px;line-height:12.4px;'>51.60</div>
<div class='t' style='left:178.00px;top:162.80px;font-size:12.4px;line-height:12.4px;'>0.00</div>
<div class='t' style='left:178.00px;top:199.80px;font-size:12.4px;line-height:12.4px;'>6.00</div>
<div class='t' style='left:178.00px;top:235.80px;font-size:12.4px;line-height:12.4px;'>1.09</div>
<div class='t' style='left:174.00px;top:272.80px;font-size:12.4px;line-height:12.4px;'>25.00</div>
<div class='t' style='left:119.20px;top:371.16px;font-size:12.8px;line-height:12.8px;transform:scaleX(0.9173);transform-origin:0 0;'>Error list</div>
<div class='t' style='left:122.00px;top:398.50px;font-size:12.4px;line-height:12.4px;z-index:3'>1</div>
<div class='t' style='left:41.70px;top:426.43px;font-size:14.5px;line-height:14.5px;transform:scaleX(0.8984);transform-origin:0 0;z-index:3'>27</div>
<div class='t' style='left:62.20px;top:423.60px;font-size:12.4px;line-height:12.4px;transform:scaleX(1.0722);transform-origin:0 0;z-index:3'>anti-theft</div>
<div class='t' style='left:41.70px;top:446.43px;font-size:14.5px;line-height:14.5px;transform:scaleX(0.8984);transform-origin:0 0;z-index:3'>28</div>
<div class='t' style='left:62.20px;top:443.60px;font-size:12.4px;line-height:12.4px;transform:scaleX(0.9533);transform-origin:0 0;z-index:3'>reverse</div>
<div class='t' style='left:41.70px;top:466.73px;font-size:14.5px;line-height:14.5px;transform:scaleX(0.8984);transform-origin:0 0;z-index:3'>29</div>
<div class='t' style='left:62.20px;top:463.90px;font-size:12.4px;line-height:12.4px;transform:scaleX(1.0193);transform-origin:0 0;z-index:3'>release throttle err</div>
<div class='t' style='left:41.70px;top:486.23px;font-size:14.5px;line-height:14.5px;transform:scaleX(0.8984);transform-origin:0 0;z-index:3'>30</div>
<div class='t' style='left:62.20px;top:483.40px;font-size:12.4px;line-height:12.4px;transform:scaleX(1.0603);transform-origin:0 0;z-index:3'>throttle-err</div>
<div class='t' style='left:41.70px;top:506.23px;font-size:14.5px;line-height:14.5px;transform:scaleX(0.8984);transform-origin:0 0;z-index:3'>31</div>
<div class='t' style='left:62.20px;top:503.40px;font-size:12.4px;line-height:12.4px;transform:scaleX(0.9204);transform-origin:0 0;z-index:3'>resvd</div>
<div class='t' style='left:41.70px;top:526.23px;font-size:14.5px;line-height:14.5px;transform:scaleX(0.8984);transform-origin:0 0;z-index:3'>32</div>
<div class='t' style='left:62.20px;top:523.40px;font-size:12.4px;line-height:12.4px;transform:scaleX(0.9204);transform-origin:0 0;z-index:3'>resvd</div>
<div class='t' style='left:618.60px;top:380.90px;font-size:12.4px;line-height:12.4px;'>default</div>
<div class='t' style='left:619.00px;top:423.50px;font-size:12.4px;line-height:12.4px;'>default</div>
<div class='t' style='left:683.60px;top:542.50px;font-size:12.4px;line-height:12.4px;transform:scaleX(0.9558);transform-origin:0 0;'>QUIT</div>
<div class='t' style='left:277.50px;top:576.17px;font-size:14.8px;line-height:14.8px;transform:scaleX(0.9733);transform-origin:0 0;font-weight:bold'>MQCON(Sabvoton) Science and Technology Co.,Ltd</div>
<div class='t td' style='left:244.10px;top:79.68px;font-size:11.6px;line-height:11.6px;transform:scaleX(0.9484);transform-origin:0 0;color:#2f2f3f'>BASIC</div>
<div class='t td' style='left:298.20px;top:79.68px;font-size:11.6px;line-height:11.6px;transform:scaleX(0.8970);transform-origin:0 0;color:#2f2f3f'>TEMP</div>
<div class='t td' style='left:348.50px;top:79.68px;font-size:11.6px;line-height:11.6px;transform:scaleX(0.8881);transform-origin:0 0;color:#2f2f3f'>FUNC</div>
<div class='t td' style='left:398.00px;top:79.68px;font-size:11.6px;line-height:11.6px;transform:scaleX(0.9803);transform-origin:0 0;color:#2f2f3f'>THROTTLE</div>
<div class='t td' style='left:478.00px;top:78.54px;font-size:12px;line-height:12px;transform:scaleX(0.9448);transform-origin:0 0;'>MOTOR</div>
<div class='t td' style='left:540.00px;top:79.68px;font-size:11.6px;line-height:11.6px;transform:scaleX(0.9119);transform-origin:0 0;color:#2f2f3f'>DEBUG</div>
<div class='t td' style='left:296.60px;top:124.30px;font-size:12.4px;line-height:12.4px;transform:scaleX(1.0006);transform-origin:0 0;'>Motor direction</div>
<div class='t td' style='left:328.20px;top:155.10px;font-size:12.4px;line-height:12.4px;transform:scaleX(0.9825);transform-origin:0 0;'>Motor Pn</div>
<div class='t td' style='left:414.50px;top:124.40px;font-size:12.4px;line-height:12.4px;'>0.00</div>
<div class='t td' style='left:414.50px;top:155.00px;font-size:12.4px;line-height:12.4px;'>16.00</div>
<div class='t td' style='left:528.60px;top:125.20px;font-size:12.4px;line-height:12.4px;transform:scaleX(0.8768);transform-origin:0 0;'>OK</div>
<div class='t td' style='left:528.60px;top:155.20px;font-size:12.4px;line-height:12.4px;transform:scaleX(0.8768);transform-origin:0 0;'>OK</div>
<div class='t td' style='left:251.40px;top:228.70px;font-size:12.4px;line-height:12.4px;transform:scaleX(0.9920);transform-origin:0 0;'>Speed limit mode select</div>
<div class='t td' style='left:404.30px;top:226.50px;font-size:12.4px;line-height:12.4px;transform:scaleX(0.9707);transform-origin:0 0;'>no limit</div>
<div class='t td' style='left:530.60px;top:229.20px;font-size:12.4px;line-height:12.4px;transform:scaleX(0.8768);transform-origin:0 0;'>OK</div>
<div class='t td' style='left:259.40px;top:261.50px;font-size:12.4px;line-height:12.4px;transform:scaleX(1.0051);transform-origin:0 0;'>Motor limit speed set</div>
<div class='t td' style='left:411.00px;top:259.50px;font-size:12.4px;line-height:12.4px;'>65.00</div>
<div class='t td' style='left:490.30px;top:259.00px;font-size:12.4px;line-height:12.4px;transform:scaleX(0.9881);transform-origin:0 0;'>%</div>
<div class='t td' style='left:531.60px;top:260.20px;font-size:12.4px;line-height:12.4px;transform:scaleX(0.8768);transform-origin:0 0;'>OK</div>
<div class='t td' style='left:298.30px;top:310.10px;font-size:12.4px;line-height:12.4px;transform:scaleX(1.0112);transform-origin:0 0;'>Low speed set</div>
<div class='t td' style='left:409.40px;top:310.00px;font-size:12.4px;line-height:12.4px;'>45.00</div>
<div class='t td' style='left:490.30px;top:308.50px;font-size:12.4px;line-height:12.4px;transform:scaleX(0.9881);transform-origin:0 0;'>%</div>
<div class='t td' style='left:533.60px;top:310.20px;font-size:12.4px;line-height:12.4px;transform:scaleX(0.8768);transform-origin:0 0;'>OK</div>
<div class='t td' style='left:287.70px;top:337.90px;font-size:12.4px;line-height:12.4px;transform:scaleX(0.9767);transform-origin:0 0;'>Middle speed set</div>
<div class='t td' style='left:409.80px;top:337.80px;font-size:12.4px;line-height:12.4px;color:#fff'>85.00</div>
<div class='t td' style='left:490.30px;top:337.50px;font-size:12.4px;line-height:12.4px;transform:scaleX(0.9881);transform-origin:0 0;'>%</div>
<div class='t td' style='left:533.60px;top:339.20px;font-size:12.4px;line-height:12.4px;transform:scaleX(0.8768);transform-origin:0 0;'>OK</div>
</body></html>
